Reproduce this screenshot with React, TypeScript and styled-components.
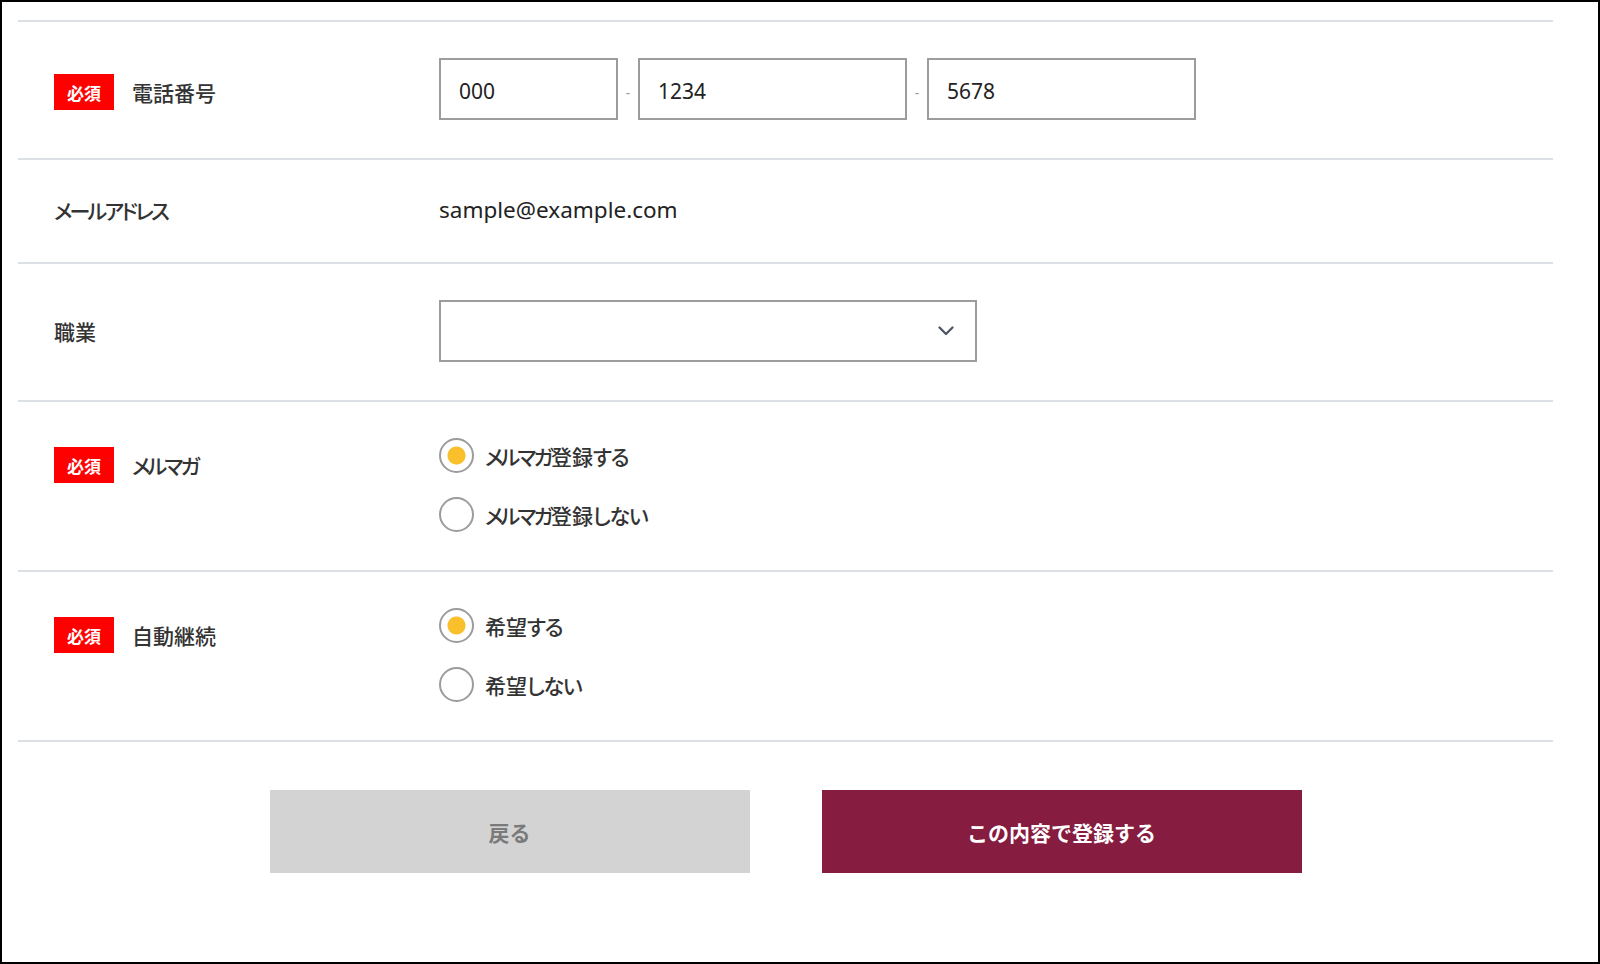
import React from "react";
import styled, { createGlobalStyle } from "styled-components";

const GlobalStyle = createGlobalStyle`
  html, body {
    margin: 0;
    padding: 0;
    background: #ffffff;
  }
  body {
    font-family: "Noto Sans", "Noto Sans CJK JP", sans-serif;
    color: #333333;
  }
  * { box-sizing: border-box; }
`;

const Frame = styled.div`
  width: 1600px;
  height: 964px;
  border: 2px solid #000000;
  padding: 18px 0 0 16px;
  background: #ffffff;
`;

const Form = styled.form`
  width: 1535px;
  border-top: 2px solid #dcdfe4;
`;

const Row = styled.div<{ $top?: boolean }>`
  display: flex;
  align-items: ${(p) => (p.$top ? "flex-start" : "center")};
  padding: 36px 0 38px;
  border-bottom: 2px solid #dcdfe4;
`;

const LabelCell = styled.div<{ $offset?: number }>`
  width: 421px;
  flex: none;
  padding-left: 36px;
  padding-top: ${(p) => p.$offset ?? 0}px;
  display: flex;
  align-items: center;
  gap: 18px;
`;

const Badge = styled.span`
  display: inline-flex;
  align-items: center;
  justify-content: center;
  width: 60px;
  height: 36px;
  background: #ff0000;
  color: #ffffff;
  font-size: 17px;
  font-weight: 700;
  font-family: "Noto Sans CJK JP", sans-serif;
`;

const LabelText = styled.span`
  font-family: "Noto Sans CJK JP", sans-serif;
  font-feature-settings: "palt";
  font-size: 21px;
  font-weight: 500;
  color: #333333;
  line-height: 28px;
`;

/* Kana in the reference font are set narrower than in Noto Sans CJK */
const Katakana = styled.span`
  letter-spacing: -0.13em;
`;

const Hiragana = styled.span`
  letter-spacing: -0.06em;
`;

const Jp: React.FC<{ text: string }> = ({ text }) => {
  const parts = text.split(/([\u30A0-\u30FF]+|[\u3040-\u309F]+)/).filter(Boolean);
  return (
    <>
      {parts.map((p, i) =>
        /^[\u30A0-\u30FF]+$/.test(p) ? (
          <Katakana key={i}>{p}</Katakana>
        ) : /^[\u3040-\u309F]+$/.test(p) ? (
          <Hiragana key={i}>{p}</Hiragana>
        ) : (
          <React.Fragment key={i}>{p}</React.Fragment>
        )
      )}
    </>
  );
};

const ValueCell = styled.div`
  flex: 1;
  display: flex;
  align-items: center;
`;

const ValueText = styled.span`
  font-family: "Noto Sans", "Noto Sans CJK JP", sans-serif;
  font-size: 22.5px;
  color: #222222;
  line-height: 28px;
`;

const TextInput = styled.input<{ $w: number }>`
  width: ${(p) => p.$w}px;
  height: 62px;
  border: 2px solid #9c9c9c;
  border-radius: 0;
  padding: 4px 0 0 18px;
  font-family: "Noto Sans", "Noto Sans CJK JP", sans-serif;
  font-size: 21px;
  color: #222222;
  background: #ffffff;
  outline: none;
`;

const Dash = styled.span`
  width: 20px;
  text-align: center;
  font-family: "Noto Sans", sans-serif;
  font-size: 14px;
  color: #9a9a9a;
  padding-top: 6px;
`;

const SelectWrap = styled.div`
  position: relative;
  width: 538px;
  height: 62px;
`;

const Select = styled.select`
  width: 100%;
  height: 100%;
  appearance: none;
  -webkit-appearance: none;
  border: 2px solid #9c9c9c;
  border-radius: 0;
  background: #ffffff;
  padding: 0 18px;
  font-family: "Noto Sans", "Noto Sans CJK JP", sans-serif;
  font-size: 21px;
  color: #222222;
  outline: none;
`;

const Chevron = styled.svg`
  position: absolute;
  right: 23px;
  top: 26px;
  pointer-events: none;
`;

const RadioGroup = styled.div`
  display: flex;
  flex-direction: column;
  gap: 24px;
`;

const RadioLabel = styled.label`
  display: flex;
  align-items: center;
  gap: 11px;
  height: 35px;
  font-family: "Noto Sans CJK JP", sans-serif;
  font-feature-settings: "palt";
  font-size: 21px;
  font-weight: 500;
  color: #333333;
  cursor: pointer;
`;

const RadioInput = styled.input`
  appearance: none;
  -webkit-appearance: none;
  margin: 0;
  width: 35px;
  height: 35px;
  flex: none;
  border: 2px solid #9c9c9c;
  border-radius: 50%;
  background: #ffffff;
  &:checked {
    background: radial-gradient(circle, #f9c02c 0 8.5px, #ffffff 9.5px);
  }
`;

const Buttons = styled.div`
  display: flex;
  justify-content: center;
  gap: 72px;
  margin-top: 48px;
`;

const Button = styled.button<{ $primary?: boolean }>`
  width: 480px;
  height: 83px;
  border: none;
  border-radius: 0;
  background: ${(p) => (p.$primary ? "#861c3f" : "#d3d3d3")};
  color: ${(p) => (p.$primary ? "#ffffff" : "#7a7a7a")};
  font-family: "Noto Sans CJK JP", sans-serif;
  font-size: 21px;
  font-weight: 700;
  cursor: pointer;
  padding-top: 2px;
`;

type Option = { label: string; checked?: boolean };

const RadioRow: React.FC<{ label: string; name: string; options: Option[] }> = ({
  label,
  name,
  options,
}) => (
  <Row $top>
    <LabelCell $offset={9}>
      <Badge>必須</Badge>
      <LabelText>
        <Jp text={label} />
      </LabelText>
    </LabelCell>
    <RadioGroup>
      {options.map((o) => (
        <RadioLabel key={o.label}>
          <RadioInput type="radio" name={name} defaultChecked={o.checked} />
          <span>
            <Jp text={o.label} />
          </span>
        </RadioLabel>
      ))}
    </RadioGroup>
  </Row>
);

export default function App() {
  return (
    <>
      <GlobalStyle />
      <Frame>
        <Form onSubmit={(e) => e.preventDefault()}>
          <Row>
            <LabelCell $offset={6}>
              <Badge>必須</Badge>
              <LabelText>電話番号</LabelText>
            </LabelCell>
            <ValueCell>
              <TextInput $w={179} defaultValue="000" />
              <Dash>-</Dash>
              <TextInput $w={269} defaultValue="1234" />
              <Dash>-</Dash>
              <TextInput $w={269} defaultValue="5678" />
            </ValueCell>
          </Row>
          <Row>
            <LabelCell>
              <LabelText>
                <Jp text="メールアドレス" />
              </LabelText>
            </LabelCell>
            <ValueCell>
              <ValueText>sample@example.com</ValueText>
            </ValueCell>
          </Row>
          <Row>
            <LabelCell>
              <LabelText>職業</LabelText>
            </LabelCell>
            <ValueCell>
              <SelectWrap>
                <Select defaultValue="">
                  <option value=""></option>
                </Select>
                <Chevron width="16" height="10" viewBox="0 0 16 10" fill="none">
                  <path
                    d="M1.5 1.5 L8 8 L14.5 1.5"
                    stroke="#4b5262"
                    strokeWidth="2.2"
                    strokeLinecap="round"
                    strokeLinejoin="round"
                  />
                </Chevron>
              </SelectWrap>
            </ValueCell>
          </Row>
          <RadioRow
            label="メルマガ"
            name="mailmag"
            options={[{ label: "メルマガ登録する", checked: true }, { label: "メルマガ登録しない" }]}
          />
          <RadioRow
            label="自動継続"
            name="auto"
            options={[{ label: "希望する", checked: true }, { label: "希望しない" }]}
          />
          <Buttons>
            <Button type="button">戻る</Button>
            <Button type="submit" $primary>
              この内容で登録する
            </Button>
          </Buttons>
        </Form>
      </Frame>
    </>
  );
}
